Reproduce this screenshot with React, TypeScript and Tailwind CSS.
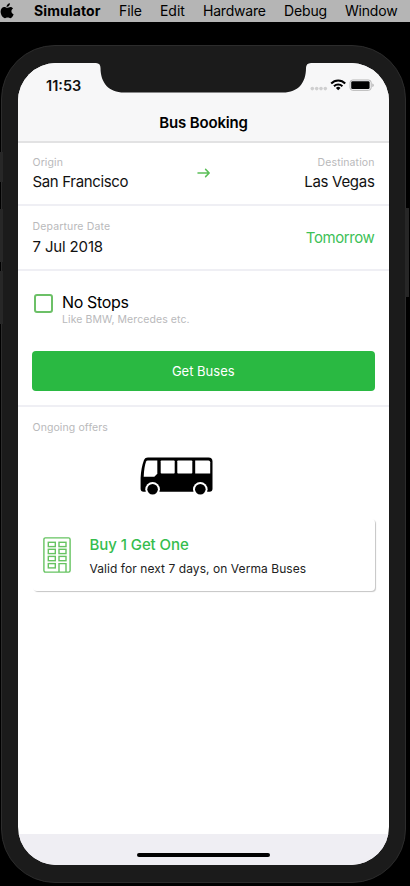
import React from "react";

const MENU = [
  { label: "File", cls: "left-[119px] tracking-[-0.1px]" },
  { label: "Edit", cls: "left-[160px] tracking-[-0.05px]" },
  { label: "Hardware", cls: "left-[203px] tracking-[-0.2px]" },
  { label: "Debug", cls: "left-[284px] tracking-[-0.15px]" },
  { label: "Window", cls: "left-[345px] tracking-[-0.2px]" },
];

function AppleLogo() {
  return (
    <svg className="h-[16px] w-[14px]" viewBox="0 0 14 16" fill="#000">
      <path d="M9.9 0.2c.1 1-.3 1.900-.9 2.600-.6.700-1.500 1.200-2.400 1.100-.1-.9.300-1.900.9-2.500C8.100.7 9.100.25 9.900.2zM13.100 5.500c-1.100.7-1.700 1.600-1.700 2.800 0 1.400.800 2.500 2.200 3-.4 1.300-1.700 3.900-3.300 3.900-.9 0-1.400-.6-2.700-.6-1.200 0-1.800.6-2.600.6C3.200 15.200.6 12.200.6 8.600c0-2.900 1.800-4.600 3.700-4.600 1.200 0 2.200.8 2.900.8.700 0 1.900-.9 3.300-.9 1 0 2 .5 2.600 1.600z" />
    </svg>
  );
}

function StatusIcons() {
  return (
    <svg className="h-[14px] w-[66px]" viewBox="0 0 66 14">
      <g fill="#cfcfd0">
        <circle cx="3.300" cy="10.600" r="1.800" />
        <circle cx="7.700" cy="10.600" r="1.800" />
        <circle cx="12" cy="10.600" r="1.800" />
        <circle cx="16.300" cy="10.600" r="1.800" />
      </g>
      <g fill="none" stroke="#000" strokeWidth="2">
        <path d="M22.200 5.500a9.600 9.600 0 0 1 14 0" />
        <path d="M25 8.300a5.900 5.900 0 0 1 8.400 0" />
      </g>
      <path d="M26.900 9.900a3.200 3.200 0 0 1 4.600 0l-2.300 2.400z" fill="#000" />
      <rect x="41" y="2" width="21.200" height="10.300" rx="2.700" fill="#f7f7f8" stroke="#b4b4b5" />
      <rect x="42.200" y="3.200" width="18.400" height="7.900" rx="1.300" fill="#000" />
      <path d="M63.300 5.400c1.100.3 1.500 1 1.500 1.800s-.4 1.500-1.500 1.800z" fill="#b4b4b5" />
    </svg>
  );
}

function BusIcon() {
  return (
    <svg className="h-[39px] w-[74px]" viewBox="0 0 74 39">
      <path d="M8 .6h60.500a4 4 0 0 1 4 4v27.200a3 3 0 0 1-3 3H3.600a3 3 0 0 1-3-3V21C1 14 2 8 4 3.100 4.800 1.400 6 .6 8 .6z" fill="#000" />
      <g fill="#fff">
        <path d="M7.700 3.500h9.600v13.200l-3 3.100H3.700C3.900 13.500 4.800 8 6.100 4.500c.3-.7.800-1 1.600-1z" />
        <rect x="20.700" y="3.500" width="14" height="13" rx=".8" />
        <rect x="37.300" y="3.500" width="15" height="13" rx=".8" />
        <path d="M55.200 3.500H68.500a1.700 1.700 0 0 1 1.700 1.700V16.500h-15z" />
        <circle cx="12.600" cy="32.300" r="7.300" />
        <circle cx="60.300" cy="32.300" r="7.300" />
      </g>
      <circle cx="12.600" cy="32.300" r="5.300" fill="#000" />
      <circle cx="60.300" cy="32.300" r="5.300" fill="#000" />
    </svg>
  );
}

const WINDOWS = [
  [5.300, 5.300], [16, 5.300],
  [5.300, 12.300], [16, 12.300],
  [5.300, 19.400], [16, 19.400],
  [5.300, 26.600],
];

function BuildingIcon() {
  return (
    <svg className="h-[36px] w-[28px]" viewBox="0 0 28 36" fill="none" stroke="#66c361" strokeWidth="1.400">
      <rect x=".9" y=".9" width="26.200" height="34.200" rx="1.500" />
      {WINDOWS.map(([x, y]) => (
        <rect key={`${x}-${y}`} x={x} y={y} width="7" height="4.300" />
      ))}
      <path d="M16 35V26.600h7V35" />
    </svg>
  );
}

function Origin() {
  return (
    <section className="flex h-[63px] items-start justify-between border-b-2 border-[#efeff4] px-[14.500px] pt-[12px]">
      <div className="w-[120px]">
        <div className="text-[10.500px] leading-[15px] text-[#b9b9bb] tracking-[0.1px]">Origin</div>
        <div className="mt-[3px] text-[15px] leading-[18px] tracking-[-0.34px]">San Francisco</div>
      </div>
      <svg className="mt-[13px] h-[10px] w-[14px]" viewBox="0 0 14 10" fill="none" stroke="#5bbf58" strokeWidth="1.500" strokeLinecap="round" strokeLinejoin="round">
        <path d="M1 5h11.100M8.600 1.400 12.200 5 8.600 8.600" />
      </svg>
      <div className="w-[120px] text-right">
        <div className="text-[10.500px] leading-[15px] text-[#b9b9bb] tracking-[0.1px]">Destination</div>
        <div className="mt-[3px] text-[15px] leading-[18px] tracking-[-0.300px]">Las Vegas</div>
      </div>
    </section>
  );
}

export default function App() {
  return (
    <div className="flex h-[886px] w-[410px] flex-col overflow-hidden bg-black font-['Inter','Liberation_Sans',sans-serif] text-[#111]">
      <nav className="relative flex h-[22px] shrink-0 items-center bg-[#b5b5b5] text-[14px] leading-[22px] text-black">
        <AppleLogo />
        <span className="absolute left-[34px] font-bold tracking-[0.1px]">Simulator</span>
        {MENU.map((m) => (
          <span key={m.label} className={`absolute ${m.cls}`}>{m.label}</span>
        ))}
      </nav>

      <div className="relative mt-[23px] ml-px h-[838px] w-[405px] shrink-0 rounded-[54px] border border-[#2c2c2c] bg-[#1b1b1b] px-[16px] pt-[17px]">
        <div className="absolute -right-[4px] top-[162px] h-[89px] w-[4px] bg-[#272727]" />
        <div className="absolute -left-[2px] top-[106px] h-[30px] w-[3px] bg-[#272727]" />
        <div className="absolute -left-[2px] top-[163px] h-[53px] w-[3px] bg-[#272727]" />
        <div className="absolute -left-[2px] top-[225px] h-[53px] w-[3px] bg-[#272727]" />

        <div className="relative flex h-[802px] w-[371px] flex-col overflow-hidden rounded-[38px] bg-white">
          <header className="h-[80px] shrink-0 border-b-2 border-[#e2e2e3] bg-[#f7f7f8]">
            <div className="flex h-[44px] items-start justify-between pr-[14px] pl-[28px]">
              <span className="mt-[14px] text-[14.500px] font-semibold leading-[18px] text-[#111]">11:53</span>
              <span className="mt-[15px] flex"><StatusIcons /></span>
            </div>
            <h1 className="pt-px text-center text-[15px] font-semibold leading-[30px] tracking-[-0.15px] text-black">Bus Booking</h1>
          </header>
          <svg className="absolute left-[78px] top-0 h-[30px] w-[215px]" viewBox="0 0 215 30">
            <path d="M0 0H215Q210 .2 210 5C210 20 202 29.500 187 29.500H28C13 29.500 4.500 20 4.500 5Q4.500 .2 0 0z" fill="#1b1b1b" />
          </svg>

          <Origin />

          <section className="flex h-[65px] justify-between border-b-2 border-[#efeff4] px-[14.500px] pt-[14px]">
            <div>
              <div className="text-[10.500px] leading-[14px] text-[#b9b9bb] tracking-[0.150px]">Departure Date</div>
              <div className="mt-[4px] text-[15px] leading-[18px] tracking-[-0.150px]">7 Jul 2018</div>
            </div>
            <div className="mt-[8px] text-[15px] leading-[20px] tracking-[-0.400px] text-[#3dc157]">Tomorrow</div>
          </section>

          <section className="h-[136px] border-b-2 border-[#efeff4] px-[14px] pt-[21px]">
            <div className="flex">
              <div className="mt-[2px] ml-[2px] h-[19px] w-[19px] rounded-[3px] border-2 border-[#6cc067]" />
              <div className="ml-[9px]">
                <div className="text-[16px] leading-[20px] tracking-[-0.350px] text-black">No Stops</div>
                <div className="mt-px text-[10.500px] leading-[14px] text-[#b9b9bb] tracking-[0.080px]">Like BMW, Mercedes etc.</div>
              </div>
            </div>
            <button className="mt-[24px] block h-[39.500px] w-[342.500px] rounded-[4px] bg-[#2ab942] text-center text-[13px] leading-[40px] text-white">Get Buses</button>
          </section>

          <section className="flex flex-col px-[14.500px] pt-[14px]">
            <h2 className="text-[10.500px] leading-[14px] text-[#b9b9bb] tracking-[0.1px]">Ongoing offers</h2>
            <div className="mt-[22px] ml-[107.500px] flex"><BusIcon /></div>
            <article className="mt-[23px] flex h-[72px] w-[342px] rounded-[4px] bg-white shadow-[1px_1px_1px_rgba(0,0,0,0.23)]">
              <div className="mt-[18px] ml-[10.500px] w-[28px]"><BuildingIcon /></div>
              <div className="mt-[16px] ml-[18.500px]">
                <div className="text-[15px] font-medium leading-[20px] tracking-[-0.080px] text-[#35bd4d]">Buy 1 Get One</div>
                <div className="mt-[5px] text-[12px] leading-[18px] tracking-[0.065px] text-[#222]">Valid for next 7 days, on Verma Buses</div>
              </div>
            </article>
          </section>

          <footer className="mt-auto flex h-[31px] justify-center bg-[#efeef3] pt-[19px]">
            <div className="h-[4px] w-[133px] rounded-full bg-black" />
          </footer>
        </div>
      </div>
    </div>
  );
}
